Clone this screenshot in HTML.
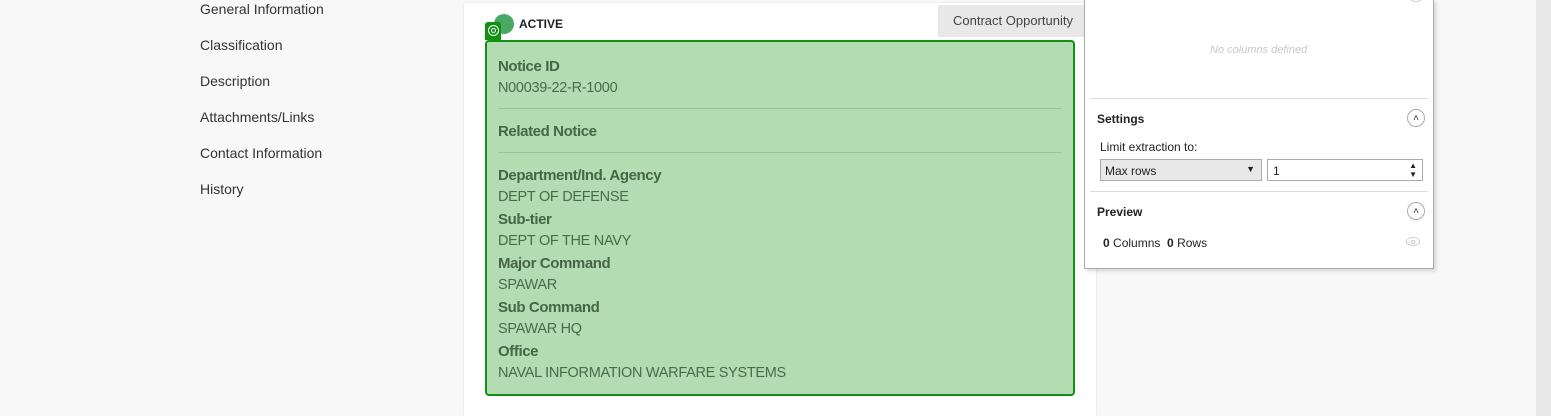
<!DOCTYPE html>
<html><head><meta charset="utf-8"><style>
*{margin:0;padding:0;box-sizing:border-box}
body{width:1551px;height:416px;overflow:hidden;background:#f8f8f8;font-family:"Liberation Sans",sans-serif;position:relative}
.a{position:absolute;white-space:nowrap}
.nav{left:200px;font-size:14px;color:#333}
.card{left:464px;top:3px;width:632px;height:413px;background:#fff;box-shadow:0 0 2px #ddd}
.g{left:485px;top:40px;width:590px;height:356px;background:#b3dcb3;border:2px solid #119111;border-radius:4px}
.l{left:498px;font-size:15px;color:#456545;font-weight:bold;letter-spacing:-0.4px}
.v{left:498px;font-size:14.5px;color:#4a6a4a;letter-spacing:-0.3px}
.hr{left:498px;width:563px;height:1px;background:#98c498}
.p{left:1084px;top:0;width:350px;height:269px;background:#fff;border:1px solid #aaa;border-top:none;box-shadow:2px 2px 4px rgba(0,0,0,.15)}
.s{font-size:12px;color:#222}
.c{width:18px;height:18px;border:1px solid #aaa;border-radius:50%;font-size:10px;text-align:center;line-height:17px;color:#333}
</style></head><body>
<div class="a" style="left:1536px;top:0;width:15px;height:416px;background:#e8e8e8"></div>
<div class="a nav" style="top:1px">General Information</div>
<div class="a nav" style="top:37px">Classification</div>
<div class="a nav" style="top:73px">Description</div>
<div class="a nav" style="top:109px">Attachments/Links</div>
<div class="a nav" style="top:145px">Contact Information</div>
<div class="a nav" style="top:181px">History</div>
<div class="a card"></div>
<div class="a" style="left:938px;top:5px;width:148px;height:32px;background:#e8e8e8;font-size:13px;color:#444;padding:8px 0 0 15px">Contract Opportunity</div>
<div class="a" style="left:494px;top:14px;width:20px;height:20px;border-radius:50%;background:#4aa865"></div>
<div class="a" style="left:519px;top:17px;font-size:12px;font-weight:bold;color:#222">ACTIVE</div>
<div class="a g"></div>
<div class="a" style="left:485px;top:22px;width:16px;height:18px;background:#119111;border-radius:3px 3px 0 0"></div>
<div class="a" style="left:488px;top:25px;width:11px;height:11px;border:1.5px solid #fff;border-radius:50%"></div>
<div class="a" style="left:491px;top:28px;width:5px;height:5px;border:1px solid #fff;border-radius:50%"></div>
<div class="a l" style="top:58px">Notice ID</div>
<div class="a v" style="top:80px">N00039-22-R-1000</div>
<div class="a hr" style="top:108px"></div>
<div class="a l" style="top:123px">Related Notice</div>
<div class="a hr" style="top:152px"></div>
<div class="a l" style="top:167px">Department/Ind. Agency</div>
<div class="a v" style="top:189px">DEPT OF DEFENSE</div>
<div class="a l" style="top:211px">Sub-tier</div>
<div class="a v" style="top:233px">DEPT OF THE NAVY</div>
<div class="a l" style="top:255px">Major Command</div>
<div class="a v" style="top:277px">SPAWAR</div>
<div class="a l" style="top:299px">Sub Command</div>
<div class="a v" style="top:321px">SPAWAR HQ</div>
<div class="a l" style="top:343px">Office</div>
<div class="a v" style="top:365px">NAVAL INFORMATION WARFARE SYSTEMS</div>
<div class="a p"></div>
<div class="a" style="left:1407px;top:-10px;width:18px;height:12px;border:1px solid #ccc;border-top:none;border-radius:0 0 9px 9px"></div>
<div class="a" style="left:1210px;top:44px;font-size:11px;font-style:italic;color:#c8c8c8">No columns defined</div>
<div class="a" style="left:1090px;top:98px;width:338px;height:1px;background:#ddd"></div>
<div class="a s" style="left:1097px;top:112px;font-weight:bold">Settings</div>
<div class="a c" style="left:1407px;top:109px">&#x2c4;</div>
<div class="a s" style="left:1100px;top:140px">Limit extraction to:</div>
<div class="a s" style="left:1100px;top:159px;width:162px;height:22px;border:1px solid #aaa;background:#e8e8e8;padding:4px 4px">Max rows<span style="position:absolute;right:6px;top:4px;font-size:9px">&#9660;</span></div>
<div class="a s" style="left:1267px;top:159px;width:156px;height:22px;border:1px solid #aaa;background:#fff;padding:4px 5px">1<span style="position:absolute;right:5px;top:1px;font-size:8px;line-height:9px">&#9650;<br>&#9660;</span></div>
<div class="a" style="left:1090px;top:191px;width:338px;height:1px;background:#ddd"></div>
<div class="a s" style="left:1097px;top:205px;font-weight:bold">Preview</div>
<div class="a c" style="left:1407px;top:202px">&#x2c4;</div>
<div class="a s" style="left:1103px;top:236px"><b>0</b> Columns&nbsp; <b>0</b> Rows</div>
<div class="a" style="left:1406px;top:237px;width:14px;height:9px;border:1px solid #ccc;border-radius:50%"></div>
<div class="a" style="left:1411px;top:240px;width:4px;height:4px;border:1px solid #ccc;border-radius:50%"></div>
</body></html>
